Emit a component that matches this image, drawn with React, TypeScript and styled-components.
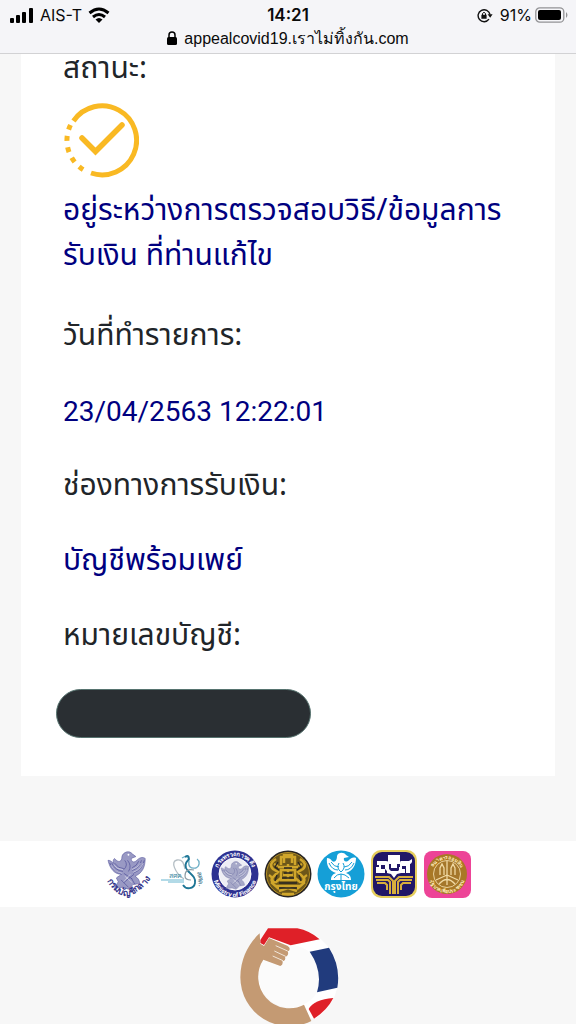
import React from "react";
import styled, { createGlobalStyle } from "styled-components";

const Global = createGlobalStyle`
  *, *::before, *::after { box-sizing: border-box; }
  html, body { margin: 0; background: #f7f7f7; }
  body { font-family: Inter, "Liberation Sans", sans-serif; color: #212529; }
`;

const Screen = styled.div`
  height: 100vh;
  display: flex;
  flex-direction: column;
  overflow: hidden;
`;

const Chrome = styled.header`
  position: relative;
  flex: none;
  background: #f5f5f8;
  border-bottom: 1px solid #d2d2d4;
  color: #0a0a0a;
  padding: 3px 8px 4px;
`;

const StatusBar = styled.div`
  display: grid;
  grid-template-columns: 1fr auto 1fr;
  align-items: center;
  height: 24px;
  font-size: 16px;
`;

const StatusSide = styled.div<{ $end?: boolean }>`
  display: flex;
  align-items: center;
  justify-content: ${(p) => (p.$end ? "flex-end" : "flex-start")};
  gap: ${(p) => (p.$end ? 3 : 6)}px;
`;

const Clock = styled.time`
  font-size: 17px;
  font-weight: 600;
`;

const RotationIcon = styled.svg`
  margin-right: 4px;
`;

const AddressBar = styled.div`
  display: flex;
  justify-content: center;
  align-items: center;
  gap: 7px;
  height: 22px;
  font-family: "Liberation Sans", sans-serif;
  font-size: 16px;
`;

const Content = styled.main`
  flex: 1 0 auto;
  margin-top: -7px;
`;

const Card = styled.section`
  margin: 0 21px;
  padding: 0 42px 38px;
  background: #fff;
`;

const Details = styled.dl`
  margin: 0;
  font-family: "Noto Sans Thai", "Noto Sans", "Open Sans", sans-serif;
  font-size: 30px;
  line-height: 45px;
`;

const Label = styled.dt`
  margin: 0 0 30px;
`;

const StatusLabel = styled(Label)`
  margin-bottom: 10px;
`;

const Value = styled.dd`
  margin: 0 0 30px;
  color: #00007f;
`;

const StatusValue = styled(Value)`
  margin-bottom: 35px;
`;

const DateValue = styled(Value)`
  font-family: Roboto, sans-serif;
  font-size: 28px;
`;

const StatusIcon = styled.svg`
  display: block;
  margin-bottom: 10px;
`;

const Redacted = styled.div`
  width: 255px;
  height: 49px;
  margin-left: -7px;
  border: 1px solid #56736f;
  border-radius: 25px;
  background: #2a2f33;
`;

const Partners = styled.ul`
  list-style: none;
  display: flex;
  justify-content: center;
  gap: 5px;
  height: 66px;
  margin: 65px 0 0;
  padding: 9px 0;
  background: #fff;
`;

const Partner = styled.li`
  width: 48px;
  height: 48px;
`;

const Footer = styled.footer`
  display: flex;
  justify-content: center;
  padding-top: 18px;
`;

function Bird({ color, x = 0, y = 0, s = 1 }: { color: string; x?: number; y?: number; s?: number }) {
  return (
    <g transform={`translate(${x} ${y}) scale(${s})`} stroke={color} fill="none">
      <path
        fill={color}
        fillOpacity=".6"
        strokeWidth=".6"
        d="M15 6C16 1 23-1 26 3l4 3-5 2c0 4 3 5 6 2 3-3 6-4 9-2 0 9-3 16-11 19 3 2 5 4 5 8l-7 1-5 5-6-2-9 1 4-7-2-4c2-2 4-2 5-4C7 25 2 19 0 10c3 0 4 2 6 3-1-3 0-4 1-5 4 5 8 4 8-2z"
      />
      <path strokeWidth=".8" d="M2 13q3 9 13 12M4 13q4 8 12 9M7 13q4 6 10 6M39 10q-2 10-12 14M36 10q-2 8-10 11M33 11q-2 5-7 7M18 10q4 5-1 10M21 10q5 6 1 12M17 24l9 6M28 25l-11 9M14 31l8 8M25 29l4 7" />
      <path stroke="#fff" strokeOpacity=".7" strokeWidth=".7" d="M3 15q4 8 12 9M6 15q4 5 10 5M38 13q-3 7-11 10M35 13q-3 5-9 7M18 27l8 7M24 25l-7 8" />
      <circle cx="22" cy="4" r="1" fill="#fff" stroke="none" />
    </g>
  );
}

function Comptroller() {
  return (
    <svg width="48" height="48" viewBox="0 0 48 48" role="img" aria-label="กรมบัญชีกลาง">
      <path id="cgd" d="M1 29Q20 63 47 27" fill="none" />
      <Bird color="#55559c" x={3} y={1} s={0.93} />
      <text fontSize="9" fontWeight="700" fill="#34348a" textAnchor="middle">
        <textPath href="#cgd" startOffset="50%">กรมบัญชีกลาง</textPath>
      </text>
    </svg>
  );
}

function FiscalPolicy() {
  return (
    <svg width="48" height="48" viewBox="0 0 48 48" fill="none" role="img" aria-label="สศค">
      <path stroke="#b5bfc5" strokeWidth="1.3" d="M26 29C17 23 12 11 19 10c7-1 7 6 8 9" />
      <path stroke="#6eafc6" strokeWidth="1.3" d="M24 8c4-3 7-1 7 3-1 5 1 8 7 7 4-2 4-7 1-9" />
      <path stroke="#1d7595" strokeWidth="1.8" d="M27 7q4-3 4 2c-4 4-5 8-1 12 4 4 8 7 7 12-1 6-9 7-12 2" />
      <path stroke="#8c9ca4" strokeWidth="1.2" d="M36 20q-9-2-9 6 0 4 6 4" />
      <path stroke="#66b5cf" strokeWidth="1" d="M3 30h23M10 32h16" />
      <text x="11" y="28" fontSize="7" fill="#438aa1">สศค</text>
      <text x="39" y="22" fontSize="7" fill="#22627b" transform="rotate(82 39 22)">สศค.</text>
    </svg>
  );
}

function Finance() {
  return (
    <svg width="48" height="48" viewBox="0 0 48 48" role="img" aria-label="Ministry of Finance">
      <path id="mof1" d="M6 24a18 18 0 0 1 36 0" fill="none" />
      <path id="mof2" d="M2 25a22 22 0 0 0 44 0" fill="none" />
      <circle cx="24" cy="24" r="23.5" fill="#2d3191" />
      <circle cx="24" cy="24" r="16" fill="#eeeef5" stroke="#fff" />
      <Bird color="#7779aa" x={10} y={11} s={0.69} />
      <g fill="#fff" fontSize="6" fontWeight="700">
        <text textAnchor="middle"><textPath href="#mof1" startOffset="50%">กระทรวงการคลัง</textPath></text>
        <text textAnchor="middle"><textPath href="#mof2" startOffset="50%">Ministry of Finance</textPath></text>
      </g>
    </svg>
  );
}

function Government() {
  return (
    <svg width="48" height="48" viewBox="0 0 48 48" role="img" aria-label="สำนักนายกรัฐมนตรี">
      <circle cx="24" cy="24" r="23.5" fill="#272423" />
      <circle cx="24" cy="24" r="21.5" fill="#6c5619" stroke="#b58f25" strokeWidth="1" />
      <g stroke="#d0a62b" fill="none" strokeWidth="2.5">
        <path d="M17 15V7h14v8M20 13V5h8v8M14 17h20M17 20h14v10H17zM19 25h10M24 14v17" />
        <path d="M12 9q-8 5-3 10l5 3-5 5q-4 5 3 5l5-4M36 9q8 5 3 10l-5 3 5 5q4 5-3 5l-5-4" />
        <path d="M5 25q5 3 3 8l7 6M43 25q-5 3-3 8l-7 6M12 36h24M15 41l9-3 9 3M18 44h12M10 14l4 2M38 14l-4 2" />
      </g>
      <path d="M20 18h8M20 23h8M18 28h12M15 33h18M14 12l-3 5 4 3M34 12l3 5-4 3M13 25l-2 6M35 25l2 6M15 38h18" stroke="#292522" strokeWidth="1.3" fill="none" />
    </svg>
  );
}

function Krungthai() {
  return (
    <svg width="48" height="48" viewBox="0 0 48 48" role="img" aria-label="กรุงไทย">
      <circle cx="24" cy="24" r="23.5" fill="#159fd7" />
      <path fill="#fff" d="M20 6c1-4 7-4 9-1l3 2-5 1c-1 3 2 5 5 2 2-2 4-3 7-2 0 8-4 13-10 15 3 1 5 3 5 7H14c0-4 2-6 5-7C12 21 9 15 10 8c2 0 4 1 5 3 3 2 5-1 5-5z" />
      <path fill="none" stroke="#159fd7" d="M12 13q3 7 9 7M14 12q3 5 8 5M37 13q-3 7-9 7M35 12q-3 5-8 5M22 13q-3 5 2 9 5-4 2-9M17 28q3-4 7-4t8 4M24 24v6" />
      <text x="24" y="40" textAnchor="middle" fontFamily="Noto Sans Thai, Noto Sans, sans-serif" fontSize="10" fontWeight="700" fill="#fff">กรุงไทย</text>
    </svg>
  );
}

function Baac() {
  return (
    <svg width="48" height="48" viewBox="0 0 48 48" role="img" aria-label="ธ.ก.ส.">
      <rect x="1" y="0" width="46" height="48" rx="10" fill="#e6ce5c" />
      <rect x="3" y="2" width="42" height="44" rx="9" fill="#211767" />
      <path fill="#fff" d="M18 5h12v9h-3v4h-6v-4h-3zM7 11h9q3 0 3 3v5l3 3h-4l-3-3v-4h-4v4h4v4H6v-6h3v-2H7zM31 11h8l3-2v3q-1 2-2 2v9h-4v-7h-4v3h3v4h-9l3-3v-3h1v-4q0-2 1-2zM17 21h14v2l-4 1-3 4-3-4-4-1z" />
      <path stroke="#d8af3c" strokeWidth="2" fill="none" d="M5 27h14l4 4v13M6 30h12l2 2v12M7 33h8l2 2v5M43 27H29l-4 4v13M42 30H30l-2 2v12M41 33h-8l-2 2v5" />
    </svg>
  );
}

function Gsb() {
  return (
    <svg width="48" height="48" viewBox="0 0 48 48" role="img" aria-label="ธนาคารออมสิน">
      <path id="gsb1" d="M9 24a15 15 0 0 1 30 0" fill="none" />
      <path id="gsb2" d="M5 24a19 19 0 0 0 38 0" fill="none" />
      <rect x="1" y="1" width="47" height="47" rx="8" fill="#ed4497" />
      <circle cx="24" cy="24" r="20" fill="#a97825" />
      <circle cx="24" cy="24" r="13.5" fill="#a5772b" stroke="#ead19c" />
      <path d="M24 11v14M17 25v-7l2-4 2 4v7M28 25v-7l2-4 2 4v7M24 25l-11 5M24 25l11 5M24 25v10M16 34q8-9 16 0" fill="none" stroke="#f0d9a3" strokeWidth="1.3" />
      <g fontSize="5" fontWeight="700" fill="#ffebba" textAnchor="middle">
        <text><textPath href="#gsb1" startOffset="50%">ธนาคารออมสิน</textPath></text>
        <text><textPath href="#gsb2" startOffset="50%">รัฐบาลเพื่อประชาชน</textPath></text>
      </g>
    </svg>
  );
}

function CampaignLogo() {
  return (
    <svg width="102" height="102" viewBox="54 45 306 306" role="img" aria-label="เราไม่ทิ้งกัน">
      <path fill="#fff" d="M147 55h88c75 15 123 75 123 145 0 55-28 103-73 128L120 240V100z" />
      <circle cx="213" cy="199" r="94" fill="#fbfbfb" />
      <path fill="#df2028" d="M147 55h88q37 7 67 33l-87 18-65-24-15 23-11-6v-9z" />
      <path fill="#213b7d" d="M272 125l58-12q36 57 25 120l-61 14q19-62-22-122z" />
      <path fill="#df2028" d="M269 297q16-29 74-33-18 36-58 62z" />
      <path
        fill="#c49a73"
        d="M122 70l2 31 11 7 15-24 55 23q11 6 5 15l-4 2q4 9-3 15l-5 1q3 10-4 13l-4-1q4 12-6 16l-51-19A94 94 0 0 0 255 284L277 333A147 147 0 0 1 64 202C65 143 90 99 122 70z"
      />
      <path fill="none" stroke="#f1e6da" strokeWidth="3" d="M170 107l36 16M166 123l34 16M161 138l31 14" />
    </svg>
  );
}

const partners = [Comptroller, FiscalPolicy, Finance, Government, Krungthai, Baac, Gsb];

export default function App() {
  return (
    <Screen>
      <Global />
      <Chrome>
        <StatusBar>
          <StatusSide>
            <svg width="26" height="15" viewBox="0 0 26 15" aria-label="Signal">
              <rect x="2" y="10" width="4" height="5" rx="1" />
              <rect x="8" y="7" width="4" height="8" rx="1" />
              <rect x="14" y="4" width="4" height="11" rx="1" />
              <rect x="21" width="4" height="15" rx="1" />
            </svg>
            <span>AIS-T</span>
            <svg width="22" height="16" viewBox="0 0 22 16" fill="none" stroke="#000" strokeWidth="3" aria-label="Wi-Fi">
              <path d="M1.5 6q9.5-8 19 0M5 10q6-5 12 0" />
              <path fill="#000" stroke="none" d="M7.5 12.5q3.5-3 7 0L11 16z" />
            </svg>
          </StatusSide>
          <Clock>14:21</Clock>
          <StatusSide $end>
            <RotationIcon width="16" height="15" viewBox="0 0 16 15" fill="none" stroke="#111" strokeWidth="1.4" aria-label="Rotation lock">
              <path d="M12 11.2A6 6 0 1 1 13 6.5" />
              <path fill="#111" stroke="none" d="M10.6 6.2h5L13.2 9.800zM4.400 6.800h5.200v4H4.400z" />
              <path strokeWidth="1" d="M5.500 7V5.500q1.500-2.500 3 0V7" />
            </RotationIcon>
            <span>91%</span>
            <svg width="33" height="16" viewBox="0 0 33 16" aria-label="Battery">
              <rect x=".8" y=".8" width="28" height="14.4" rx="4" fill="none" stroke="#929295" strokeWidth="1.3" />
              <rect x="3" y="3" width="23" height="10" rx="2" />
              <path fill="#929295" d="M31 5q3 3 0 6z" />
            </svg>
          </StatusSide>
        </StatusBar>
        <AddressBar>
          <svg width="10" height="14" viewBox="0 0 10 14" aria-label="Secure">
            <rect y="6" width="10" height="8" rx="1.5" />
            <path d="M2 7V4q0-3 3-3t3 3v3" fill="none" stroke="#000" strokeWidth="1.5" />
          </svg>
          <span>appealcovid19.เราไม่ทิ้งกัน.com</span>
        </AddressBar>
      </Chrome>
      <Content>
        <Card>
          <Details>
            <StatusLabel>สถานะ:</StatusLabel>
            <StatusValue>
              <StatusIcon width="76" height="77" viewBox="0 0 76 77" fill="none" stroke="#f9b923" aria-hidden="true">
                <path strokeWidth="5" d="M10.500 19A34.500 34.500 0 1 1 28 71" />
                <path strokeWidth="5" strokeDasharray="5 6.400" d="M7.500 23A34.500 34.500 0 0 0 22 68.600" />
                <path strokeWidth="5.500" strokeLinecap="round" d="M19 36l13.500 13.500L59 23" />
              </StatusIcon>
              อยู่ระหว่างการตรวจสอบวิธี/ข้อมูลการ<wbr />รับเงิน ที่ท่านแก้ไข
            </StatusValue>
            <Label>วันที่ทำรายการ:</Label>
            <DateValue>23/04/2563 12:22:01</DateValue>
            <Label>ช่องทางการรับเงิน:</Label>
            <Value>บัญชีพร้อมเพย์</Value>
            <Label>หมายเลขบัญชี:</Label>
          </Details>
          <Redacted />
        </Card>
        <Partners>
          {partners.map((Logo, i) => (
            <Partner key={i}><Logo /></Partner>
          ))}
        </Partners>
        <Footer><CampaignLogo /></Footer>
      </Content>
    </Screen>
  );
}
